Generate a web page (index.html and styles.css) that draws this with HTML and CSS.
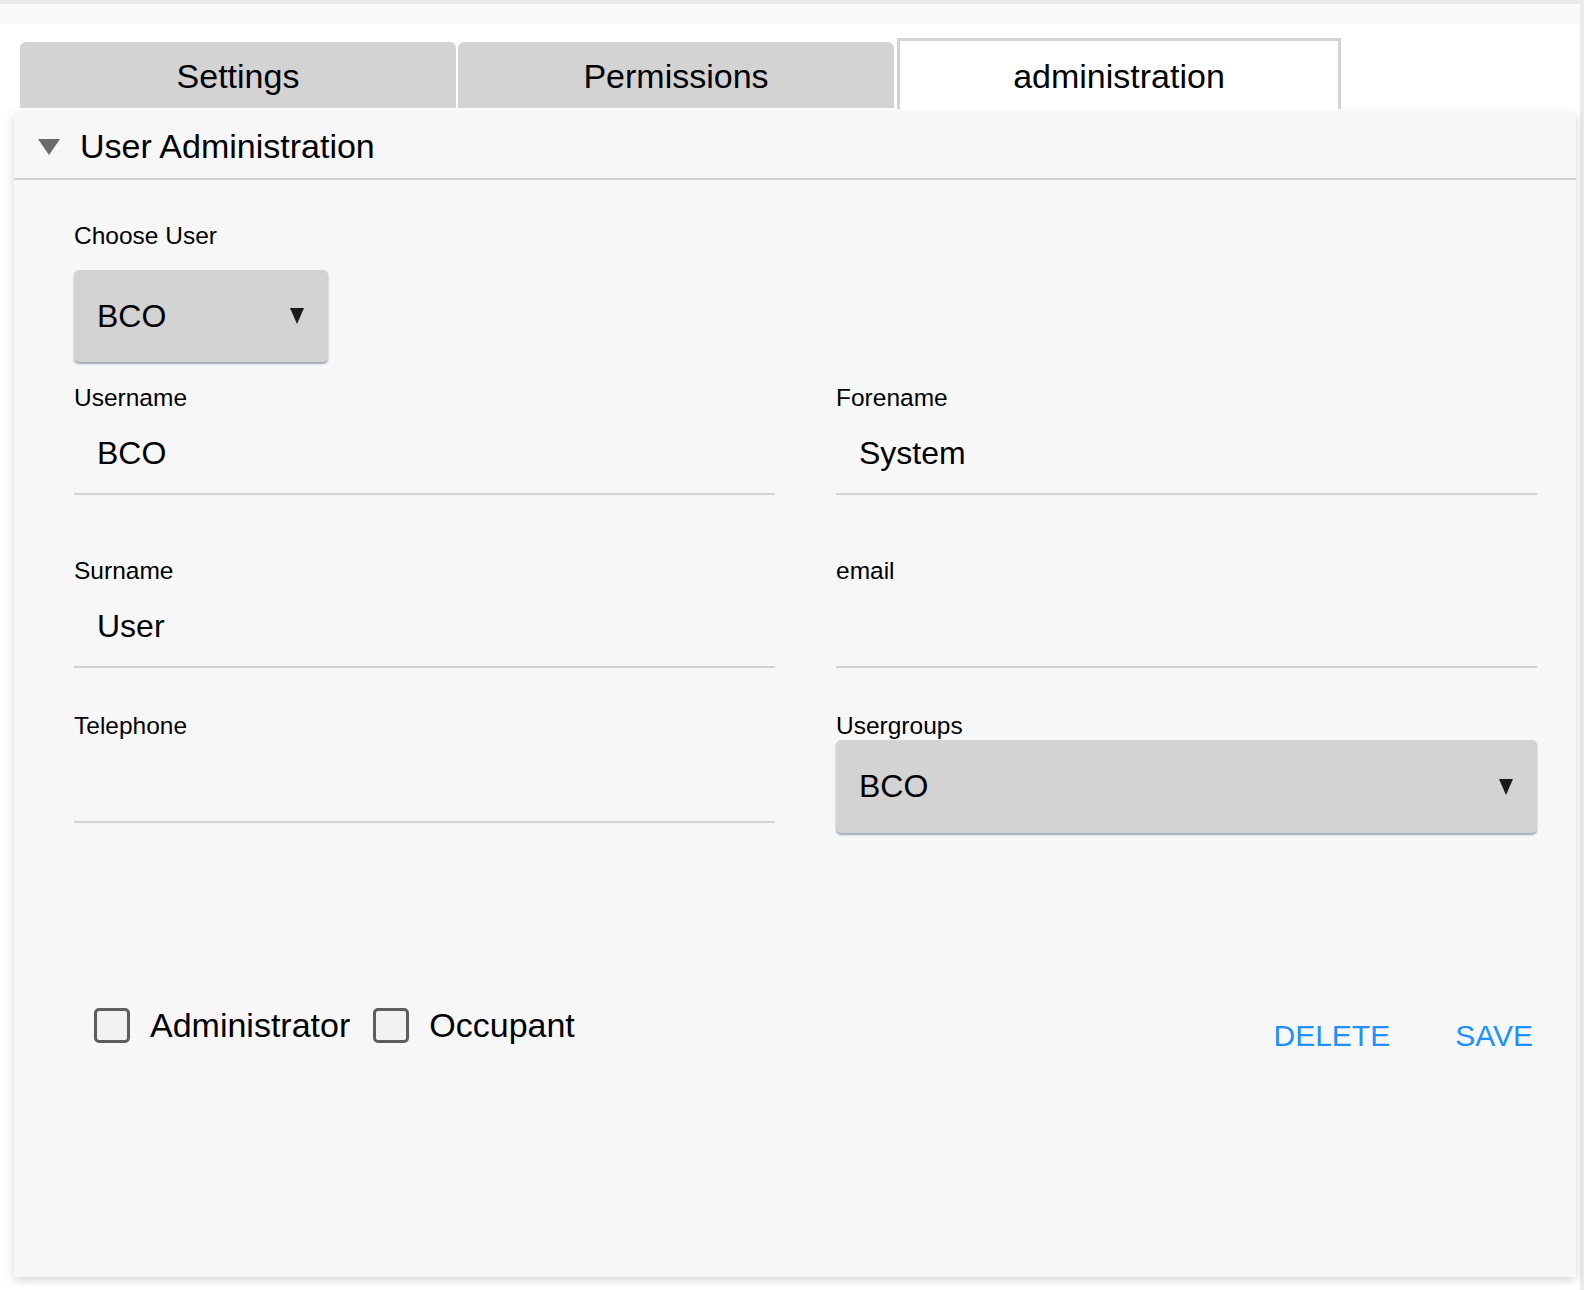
FILE: index.html
```html
<!DOCTYPE html>
<html lang="en">
<head>
<meta charset="utf-8">
<title>User Administration</title>
<link rel="stylesheet" href="styles.css">
</head>
<body>
<div class="page">
  <div class="topstrip"></div>
  <div class="tabs">
    <div class="tab tab-settings">Settings</div>
    <div class="tab tab-permissions">Permissions</div>
    <div class="tab tab-active">administration</div>
  </div>
  <div class="panel">
    <div class="panel-head">
      <span class="caret"></span>
      <span class="panel-title">User Administration</span>
    </div>
    <div class="panel-body">
      <div class="choose">
        <div class="label">Choose User</div>
        <div class="select select-small">
          <span>BCO</span>
          <span class="arrow"></span>
        </div>
      </div>

      <div class="row row-first">
        <div class="field">
          <div class="label">Username</div>
          <div class="input">BCO</div>
        </div>
        <div class="field">
          <div class="label">Forename</div>
          <div class="input">System</div>
        </div>
      </div>

      <div class="row row-second">
        <div class="field">
          <div class="label">Surname</div>
          <div class="input">User</div>
        </div>
        <div class="field">
          <div class="label">email</div>
          <div class="input"></div>
        </div>
      </div>

      <div class="row row-third">
        <div class="field">
          <div class="label">Telephone</div>
          <div class="input"></div>
        </div>
        <div class="field">
          <div class="label">Usergroups</div>
          <div class="select select-wide">
            <span>BCO</span>
            <span class="arrow"></span>
          </div>
        </div>
      </div>

      <div class="actions">
        <div class="checks">
          <label class="check"><span class="box"></span><span class="check-text">Administrator</span></label>
          <label class="check"><span class="box"></span><span class="check-text">Occupant</span></label>
        </div>
        <div class="buttons">
          <span class="btn">DELETE</span>
          <span class="btn">SAVE</span>
        </div>
      </div>
    </div>
  </div>
  <div class="panel-next"></div>
</div>
</body>
</html>
```

FILE: styles.css
```css
* {
  box-sizing: border-box;
}

html,
body {
  margin: 0;
  padding: 0;
  overflow: hidden;
}

body {
  background: #ebebeb;
  font-family: "Liberation Sans", Arial, sans-serif;
  color: #000;
}

.page {
  margin: 4px 4px 0 0;
  background: #fff;
  height: 1286px;
}

.topstrip {
  height: 20px;
  background: #fafafa;
}

.tabs {
  display: flex;
  align-items: flex-end;
  height: 85px;
  padding-left: 20px;
}

.tab {
  width: 436px;
  height: 66px;
  margin-bottom: 1px;
  padding-top: 2px;
  background: #d3d3d3;
  border-radius: 6px 6px 0 0;
  display: flex;
  align-items: center;
  justify-content: center;
  font-size: 34px;
}

.tab-settings {
  margin-right: 2px;
}

.tab-permissions {
  margin-right: 3px;
}

.tab-active {
  width: 444px;
  height: 71px;
  margin-bottom: 0;
  background: #fff;
  border: 3px solid #d3d3d3;
  border-bottom: none;
  border-radius: 0;
}

.panel {
  margin: 4px 0 0 14px;
  width: 1562px;
  height: 1164px;
  background: #f7f7f7;
  box-shadow: 0 3px 10px rgba(0, 0, 0, 0.17);
}

.panel-head {
  height: 67px;
  border-bottom: 2px solid #d3d3d3;
  display: flex;
  align-items: center;
  padding-left: 24px;
  padding-top: 2px;
  font-size: 34px;
}

.caret {
  width: 0;
  height: 0;
  border-left: 11px solid transparent;
  border-right: 11px solid transparent;
  border-top: 16px solid #6b6b6b;
  margin-right: 20px;
  margin-top: 1px;
}

.panel-body {
  padding: 42px 39px 0 60px;
}

.label {
  font-size: 24.5px;
  line-height: 28px;
}

.select {
  background: #d3d3d3;
  border-radius: 5px;
  box-shadow: 0 2px 2px rgba(50, 70, 100, 0.45);
  display: flex;
  align-items: center;
  justify-content: space-between;
  padding: 0 24px 0 23px;
  font-size: 32px;
}

.select-small {
  margin-top: 20px;
  width: 254px;
  height: 92px;
}

.select-wide {
  width: 100%;
  height: 93px;
}

.arrow {
  width: 0;
  height: 0;
  border-left: 7.5px solid transparent;
  border-right: 7.5px solid transparent;
  border-top: 16px solid #1a1a1a;
}

.row {
  display: grid;
  grid-template-columns: 1fr 1fr;
  column-gap: 61px;
  align-items: start;
}

.row-first {
  margin-top: 22px;
}

.row-second {
  margin-top: 62px;
}

.row-third {
  margin-top: 44px;
}

.input {
  margin-top: 21px;
  height: 62px;
  padding: 0 0 20px 23px;
  border-bottom: 2px solid #d3d3d3;
  font-size: 32px;
  line-height: 40px;
}

.actions {
  margin-top: 175px;
  display: flex;
  justify-content: space-between;
  align-items: flex-start;
}

.checks {
  display: flex;
  align-items: center;
  padding-left: 20px;
}

.check {
  display: flex;
  align-items: center;
  margin-right: 23px;
}

.box {
  width: 36px;
  height: 35px;
  border: 3px solid #5e5e5e;
  border-radius: 5px;
  background: #f2f2f2;
  margin-right: 20px;
}

.check-text {
  font-size: 34px;
  line-height: 35px;
}

.buttons {
  display: flex;
  gap: 65px;
  margin-top: 10px;
  margin-right: 4px;
}

.btn {
  font-size: 30px;
  line-height: 36px;
  color: #1e90ff;
}

.panel-next {
  margin: 9px 0 0 14px;
  width: 1562px;
  height: 20px;
  background: #fff;
}
```
